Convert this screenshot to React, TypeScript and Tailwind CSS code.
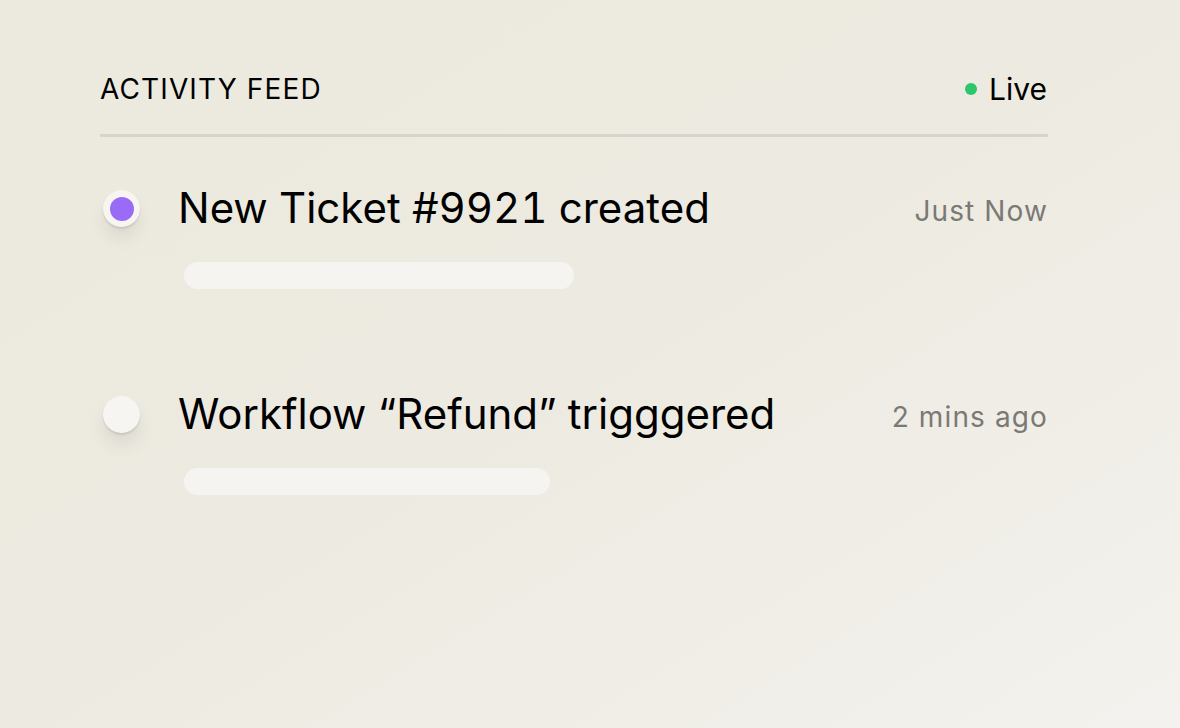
import React from 'react';

type FeedItem = {
  title: string;
  time: string;
  active: boolean;
  barWidth: number;
};

const items: FeedItem[] = [
  { title: 'New Ticket #9921 created', time: 'Just Now', active: true, barWidth: 390 },
  { title: 'Workflow \u201CRefund\u201D trigggered', time: '2 mins ago', active: false, barWidth: 366 },
];

function FeedRow({ item }: { item: FeedItem }) {
  return (
    <div className="flex items-start">
      <div className="ml-[3px] mt-[7px] w-[37px] h-[37px] shrink-0 rounded-full bg-[#F6F5F1] flex items-center justify-center shadow-[0_2px_2px_rgba(0,0,0,0.1),0_12px_18px_rgba(0,0,0,0.07)]">
        {item.active && <div className="w-[24px] h-[24px] rounded-full bg-[#9A6BF6]" />}
      </div>
      <div className="ml-[38px] flex-1 flex flex-col">
        <div className="text-[42px] leading-[50px] text-black font-normal tabular-nums">{item.title}</div>
        <div
          className="mt-[29px] ml-[6px] h-[27px] rounded-full bg-[#F5F4F0]"
          style={{ width: item.barWidth }}
        />
      </div>
      <div className="mt-[12px] text-[28px] leading-[32px] tracking-[0.04em] text-[#7A7975]">{item.time}</div>
    </div>
  );
}

export default function App() {
  return (
    <div className="w-[1180px] h-[728px] overflow-hidden bg-linear-to-br from-[#ECE9DE] via-[#EDEAE1] to-[#F4F2EE] font-['Inter',sans-serif]">
      <div className="ml-[100px] w-[948px] flex flex-col">
        <div className="mt-[71px] h-[36px] flex items-center justify-between">
          <span className="text-[28px] leading-[36px] text-black font-normal tracking-[0.04em]">ACTIVITY FEED</span>
          <div className="flex items-center gap-[12px]">
            <span className="w-[12px] h-[12px] rounded-full bg-[#2DC66A]" />
            <span className="text-[30px] leading-[36px] text-black mr-[1px]">Live</span>
          </div>
        </div>
        <div className="mt-[27px] h-[3px] bg-[#D7D4CC]" />
        <div className="mt-[46px] flex flex-col gap-[100px]">
          {items.map((item) => (
            <FeedRow key={item.title} item={item} />
          ))}
        </div>
      </div>
    </div>
  );
}
